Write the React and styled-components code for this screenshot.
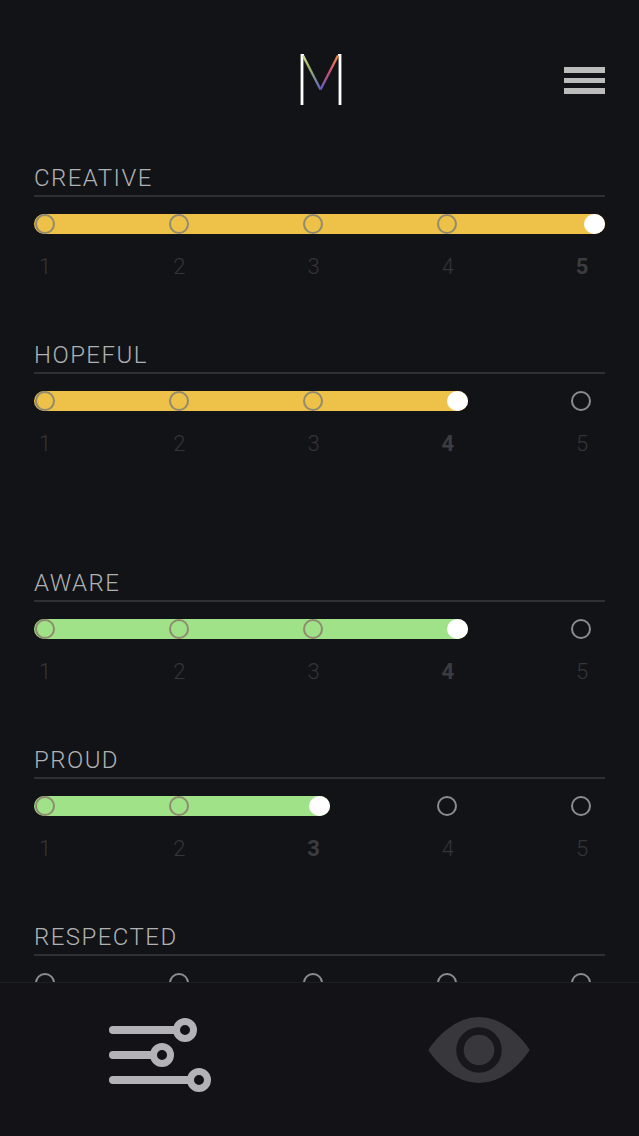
import styled, { createGlobalStyle } from 'styled-components';

const GlobalStyle = createGlobalStyle`
  html, body {
    margin: 0;
    padding: 0;
    background: #121316;
    overflow: hidden;
  }
`;

const Screen = styled.div`
  display: flex;
  flex-direction: column;
  width: 639px;
  height: 1136px;
  background: #121316;
  font-family: Roboto, "Liberation Sans", sans-serif;
`;

const Header = styled.header`
  flex: none;
  display: grid;
  grid-template-columns: 1fr auto 1fr;
  align-items: start;
  height: 107px;
  padding: 54px 34px 0;
  box-sizing: border-box;
`;

const Menu = styled.div`
  justify-self: end;
  display: flex;
  flex-direction: column;
  gap: 5px;
  width: 41px;
  margin-top: 13px;
`;

const MenuBar = styled.span`
  height: 5.5px;
  background: #bcbcbc;
`;

const Scroller = styled.main`
  flex: 1;
  min-height: 0;
  overflow: hidden;
  padding: 0 34px;
`;

const Group = styled.section`
  margin-bottom: 51px;
`;

const Item = styled.div`
  height: 177px;
  padding-top: 55px;
  box-sizing: border-box;
`;

const Label = styled.h3`
  margin: 0;
  height: 33px;
  border-bottom: 2px solid #2f3033;
  font-size: 24px;
  line-height: 33px;
  font-weight: 300;
  letter-spacing: 1.45px;
  color: #b0b1b3;
`;

const Track = styled.div`
  position: relative;
  height: 20px;
  margin-top: 17px;
`;

const Fill = styled.div`
  position: absolute;
  top: 0;
  bottom: 0;
  left: 0;
  border-radius: 10px;
  background: ${({ $tone }) => $tone};
`;

const Thumb = styled.span`
  position: absolute;
  top: 0;
  right: 0;
  width: 21px;
  height: 20px;
  border-radius: 50%;
  background: #fff;
`;

const Stops = styled.div`
  position: relative;
  display: flex;
  justify-content: space-between;
  padding: 0 14px 0 0.5px;
`;

const Stop = styled.span`
  width: 20px;
  height: 20px;
  box-sizing: border-box;
  border: 2px solid ${({ $on }) => ($on ? '#8f8a70' : '#8c8c8e')};
  border-radius: 50%;
  visibility: ${({ $hidden }) => ($hidden ? 'hidden' : 'visible')};
`;

const Numbers = styled.div`
  display: flex;
  justify-content: space-between;
  padding: 0 13px 0 1px;
  margin-top: 20px;
`;

const Number = styled.span`
  width: 20px;
  text-align: center;
  font-size: 22px;
  line-height: 26px;
  font-weight: ${({ $active }) => ($active ? 700 : 300)};
  color: ${({ $active }) => ($active ? '#3b3c3f' : '#343538')};
`;

const TabBar = styled.nav`
  flex: none;
  display: grid;
  grid-template-columns: 1fr 1fr;
  justify-items: center;
  align-items: start;
  height: 154px;
  padding-top: 34px;
  box-sizing: border-box;
  border-top: 1px solid #1e1f22;
  background: #131317;
`;

const Logo = () => (
  <svg width="44" height="52" viewBox="0 0 44 52" fill="none">
    <defs>
      <linearGradient id="logoLeft" x1="5" y1="1" x2="22.5" y2="36" gradientUnits="userSpaceOnUse">
        <stop offset="0" stopColor="#d8dca0" />
        <stop offset="0.3" stopColor="#a3bd5e" />
        <stop offset="1" stopColor="#5a5fc0" />
      </linearGradient>
      <linearGradient id="logoRight" x1="40" y1="1" x2="22.5" y2="36" gradientUnits="userSpaceOnUse">
        <stop offset="0" stopColor="#ee8a3c" />
        <stop offset="0.5" stopColor="#c84e78" />
        <stop offset="1" stopColor="#5a5fc0" />
      </linearGradient>
    </defs>
    <path d="M4 51V1.2H6" stroke="#fff" strokeWidth="2.8" />
    <path d="M42 51V1.2H40" stroke="#fff" strokeWidth="2.8" />
    <path d="M5 1.5L22.5 35.5" stroke="url(#logoLeft)" strokeWidth="2.4" />
    <path d="M40 1.5L22.5 35.5" stroke="url(#logoRight)" strokeWidth="2.4" />
  </svg>
);

const SlidersIcon = () => (
  <svg width="102" height="75" viewBox="0 -1 102 75" fill="none">
    <g stroke="#b3b2b6" strokeWidth="8" strokeLinecap="round">
      <path d="M4 12H70" />
      <path d="M4 37H47" />
      <path d="M4 62H84" />
    </g>
    <g stroke="#b3b2b6" strokeWidth="7" fill="#131317">
      <circle cx="76" cy="12" r="8.5" />
      <circle cx="53" cy="37" r="8.5" />
      <circle cx="90" cy="62" r="8.5" />
    </g>
  </svg>
);

const EyeIcon = () => (
  <svg width="102" height="68" viewBox="0 1 102 68">
    <path
      d="M2 34C8 25 26 2.5 51 2.5S94 25 100 34c-6 9-24 31.500-49 31.500S8 43 2 34z"
      fill="#38383c"
      stroke="#38383c"
      strokeWidth="3"
      strokeLinejoin="round"
    />
    <circle cx="51" cy="34" r="19" fill="none" stroke="#18181c" strokeWidth="7.5" />
  </svg>
);

const YELLOW = '#eec248';
const GREEN = '#a0e288';

const groups = [
  {
    tone: YELLOW,
    items: [
      { name: 'CREATIVE', value: 5 },
      { name: 'HOPEFUL', value: 4 },
    ],
  },
  {
    tone: GREEN,
    items: [
      { name: 'AWARE', value: 4 },
      { name: 'PROUD', value: 3 },
      { name: 'RESPECTED', value: 0 },
    ],
  },
];

const fillWidths = { 3: 296, 4: 434, 5: 571 };
const steps = [1, 2, 3, 4, 5];

const Rating = ({ name, value, tone }) => (
  <Item>
    <Label>{name}</Label>
    <Track>
      {value > 0 && (
        <Fill $tone={tone} style={{ width: fillWidths[value] }}>
          <Thumb />
        </Fill>
      )}
      <Stops>
        {steps.map((step) => (
          <Stop key={step} $on={step < value} $hidden={step === value} />
        ))}
      </Stops>
    </Track>
    <Numbers>
      {steps.map((step) => (
        <Number key={step} $active={step === value}>
          {step}
        </Number>
      ))}
    </Numbers>
  </Item>
);

const App = () => (
  <>
    <GlobalStyle />
    <Screen>
      <Header>
        <span />
        <Logo />
        <Menu>
          <MenuBar />
          <MenuBar />
          <MenuBar />
        </Menu>
      </Header>
      <Scroller>
        {groups.map((group) => (
          <Group key={group.tone}>
            {group.items.map((item) => (
              <Rating key={item.name} {...item} tone={group.tone} />
            ))}
          </Group>
        ))}
      </Scroller>
      <TabBar>
        <SlidersIcon />
        <EyeIcon />
      </TabBar>
    </Screen>
  </>
);

export default App;
